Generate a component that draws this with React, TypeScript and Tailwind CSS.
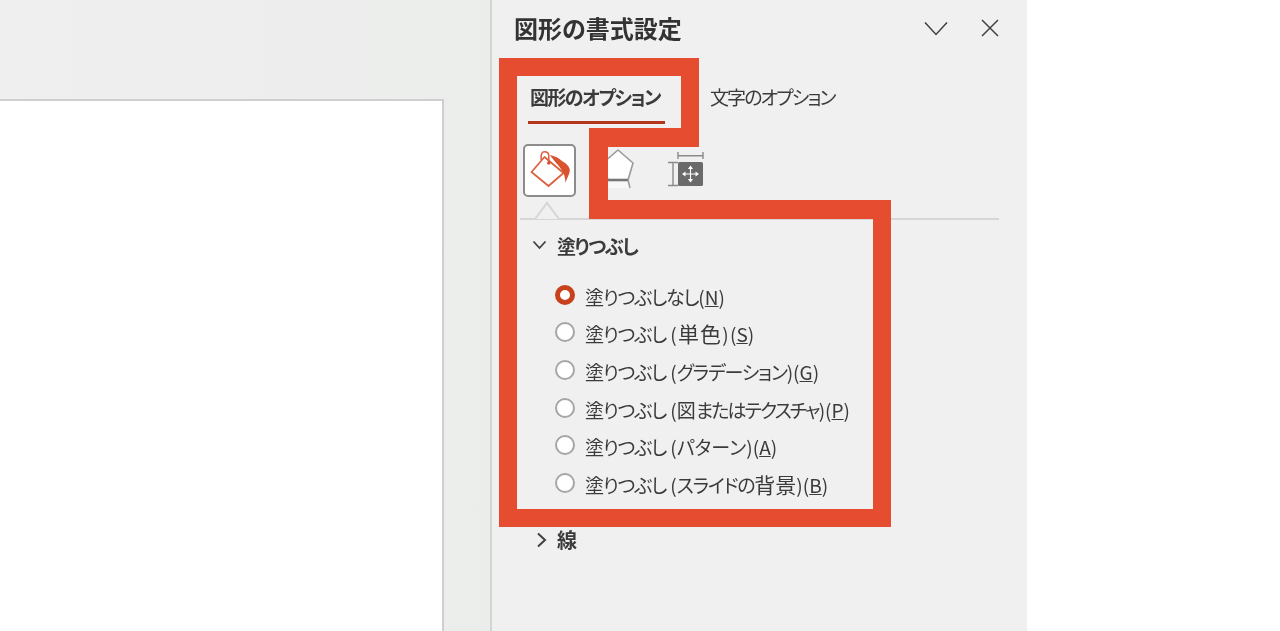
import type { ReactNode } from "react";

const font = { fontFamily: '"Noto Sans CJK JP", "Noto Sans", sans-serif' };

// Meiryo UI squeezes its kana, kanji stay wider
function Kana({ children }: { children: ReactNode }) {
  return <span className="tracking-[-1.2px]">{children}</span>;
}

function Kanji({ children }: { children: ReactNode }) {
  return <span className="text-[21px]">{children}</span>;
}

const fills: { label: ReactNode; key: string; checked?: boolean }[] = [
  { label: <Kana>塗りつぶしなし</Kana>, key: "N", checked: true },
  { label: <><Kana>塗りつぶし</Kana> <span className="tracking-[1.2px]">(<Kanji>単色</Kanji>)</span></>, key: "S" },
  { label: <><Kana>塗りつぶし</Kana> (<Kana>グラデーション</Kana>)</>, key: "G" },
  { label: <><Kana>塗りつぶし</Kana> (図<span className="tracking-[-1.9px]">またはテクスチャ</span>)</>, key: "P" },
  { label: <><Kana>塗りつぶし</Kana> (<span className="tracking-[0.1px]">パターン</span>)</>, key: "A" },
  { label: <><Kana>塗りつぶし</Kana> (<Kana>スライドの</Kana><Kanji>背景</Kanji>)</>, key: "B" },
];

function Radio({ checked }: { checked?: boolean }) {
  if (checked) {
    return <span className="block h-[20px] w-[20px] rounded-full border-[5px] border-[#c8401c] bg-white" />;
  }
  return <span className="block h-[20px] w-[20px] rounded-full border-2 border-[#a6a6a6] bg-white" />;
}

function BucketIcon() {
  return (
    <svg width="44" height="44" viewBox="0 0 44 44" fill="none">
      <path d="M3.5 23 L16.5 8 L35.5 24 L20.5 37 Z" fill="#fff" stroke="#dc5f3f" strokeWidth="1.7" strokeLinejoin="round" />
      <path d="M13.2 11 C12.5 5 14 2.7 16.5 2.7 C19 2.7 20.8 4.5 20.8 7 V13" stroke="#dc5f3f" strokeWidth="1.5" />
      <circle cx="20.8" cy="14" r="1.8" fill="#d9532f" />
      <path d="M21.8 6 C27 7 31 9 34 12 C38 14 41 17 41.8 20.3 C42 25 39 29 37.5 33.7 C37 29 36.5 25 34.2 22 C32.5 19 31 17 29 15 C26.5 12 24 9 21.8 6 Z" fill="#d9532f" />
    </svg>
  );
}

function PentagonIcon() {
  return (
    <svg width="34" height="42" viewBox="0 0 34 42" fill="none">
      <path d="M7 33 H27 L29 40 H5 Z" fill="#f8f8f8" />
      <path d="M17 2 L32 15 L27 32 H7 L2 15 Z" fill="#fff" stroke="#9a9a9a" strokeWidth="1.6" strokeLinejoin="round" />
      <path d="M7 32 H27" stroke="#777" strokeWidth="2.6" />
      <path d="M27 32 L29 40" stroke="#9a9a9a" strokeWidth="1.6" />
    </svg>
  );
}

function SizeIcon() {
  return (
    <svg width="36" height="36" viewBox="0 0 36 36" fill="none">
      <path d="M10 4.7 H35 M10 1 V8 M35 1 V8" stroke="#8a8a8a" strokeWidth="1.4" />
      <path d="M5 11.5 V34.5 M0 11.5 H10 M0 34.5 H10" stroke="#8a8a8a" strokeWidth="1.4" />
      <rect x="10" y="11" width="25" height="24" rx="1.5" fill="#6a6a6a" />
      <path d="M22.5 16 V30 M15.5 23 H29.5" stroke="#fff" strokeWidth="1.1" />
      <path d="M22.5 14.5 l-2.6 3.5 h5.2 Z M22.5 31.5 l-2.6 -3.5 h5.2 Z M14 23 l3.5 -2.6 v5.2 Z M31 23 l-3.5 -2.6 v5.2 Z" fill="#fff" />
    </svg>
  );
}

export default function App() {
  return (
    <div className="relative flex h-[631px] w-[1280px] overflow-hidden bg-white" style={font}>
      <div className="flex w-[490px] flex-col bg-gradient-to-r from-[#efefef] to-[#ebedeb] pt-[99px]">
        <div className="h-full w-[444px] border-t-2 border-r-2 border-[#cfcfcf] bg-white" />
      </div>

      <div className="flex w-[537px] flex-col border-l-2 border-[#d4d4d4] bg-[#f0f0f0] text-[#3b3b3b] blur-[0.3px] [font-feature-settings:'palt']">
        <div className="flex h-[56px] items-center pl-[22px] pr-[28px]">
          <h1 className="text-[24px] font-bold leading-none text-[#333]">図形の書式設定</h1>
          <svg className="ml-auto" width="24" height="15" viewBox="0 0 24 15" fill="none">
            <path d="M1 1.5 L12 13.5 L23 1.5" stroke="#404040" strokeWidth="1.5" />
          </svg>
          <svg className="ml-[33px]" width="18" height="18" viewBox="0 0 18 18" fill="none">
            <path d="M1 1 L17 17 M17 1 L1 17" stroke="#404040" strokeWidth="1.5" />
          </svg>
        </div>

        <div className="flex pl-[36px] pt-[28px]">
          <div className="w-[137px] whitespace-nowrap border-b-[3px] border-[#b5361c] pb-[11px] pl-[2px] text-[19px] font-bold leading-[26px] tracking-[-1.6px]">
            図形のオプション
          </div>
          <div className="ml-[45px] whitespace-nowrap text-[19px] leading-[26px] tracking-[-1.9px]">文字のオプション</div>
        </div>

        <div className="relative mx-[28px] flex h-[96px] items-start border-b-2 border-[#d6d6d6] pl-[3px] pt-[20px]">
          <div className="flex h-[53px] w-[53px] items-center justify-center rounded-[5px] border-2 border-[#8c8c8c] bg-white">
            <BucketIcon />
          </div>
          <div className="ml-[25px] mt-[4px]">
            <PentagonIcon />
          </div>
          <div className="ml-[33px] mt-[7px]">
            <SizeIcon />
          </div>
          <svg className="absolute -bottom-[2px] left-[8px]" width="38" height="20" viewBox="0 0 38 20" fill="none">
            <path d="M0 19 H7 L19 3 L31 19 H38" fill="#f0f0f0" stroke="#d6d6d6" strokeWidth="2" />
          </svg>
        </div>

        <div className="flex h-[50px] items-center pl-[40px]">
          <svg width="15" height="10" viewBox="0 0 15 10" fill="none">
            <path d="M1.5 1.5 L7.5 8 L13.5 1.5" stroke="#404040" strokeWidth="1.8" />
          </svg>
          <span className="ml-[10px] text-[19px] font-bold leading-none tracking-[-1.4px]">塗りつぶし</span>
        </div>

        <ul className="flex flex-col pl-[63px] pt-[6px]">
          {fills.map((f) => (
            <li key={f.key} className="flex h-[37.6px] items-center">
              <Radio checked={f.checked} />
              <span className="ml-[10px] mt-[3px] whitespace-nowrap text-[19px] leading-none">
                {f.label}(<span className="underline">{f.key}</span>)
              </span>
            </li>
          ))}
        </ul>

        <div className="mt-[28px] flex items-center pl-[44px]">
          <svg width="11" height="16" viewBox="0 0 11 16" fill="none">
            <path d="M2 1.5 L9 8 L2 14.5" stroke="#404040" strokeWidth="2" />
          </svg>
          <span className="ml-[10px] text-[20px] font-bold leading-none">線</span>
        </div>
      </div>

      <svg className="absolute inset-0" width="1280" height="631" viewBox="0 0 1280 631">
        <path
          fillRule="evenodd"
          fill="#e64c30"
          d="M499 58 H699 V147 H608 V200 H891 V527 H499 Z M517 76 V509 H873 V219 H589 V128 H681 V76 Z"
        />
      </svg>
    </div>
  );
}
